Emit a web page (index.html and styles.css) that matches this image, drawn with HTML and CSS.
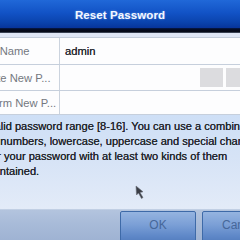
FILE: index.html
```html
<!DOCTYPE html>
<html>
<head>
<meta charset="utf-8">
<link rel="stylesheet" href="styles.css">
</head>
<body>
<div class="dialog">
  <div class="header"><span class="title">Reset Password</span></div>
  <div class="shade"></div>
  <div class="content">
    <div class="table">
      <div class="row r1">
        <div class="label">User Name</div>
        <div class="value">admin</div>
      </div>
      <div class="row r2">
        <div class="label">Create New P...</div>
        <div class="value">
          <div class="strength"><span class="bar"></span><span class="bar"></span></div>
        </div>
      </div>
      <div class="row r3">
        <div class="label">Confirm New P...</div>
        <div class="value"></div>
      </div>
    </div>
    <div class="help">
      <p class="hint">Valid password range [8-16]. You can use a combination<br>of numbers, lowercase, uppercase and special characters<br>for your password with at least two kinds of them<br>contained.</p>
    </div>
    <div class="buttons">
      <button class="btn ok">OK</button>
      <button class="btn cancel">Cancel</button>
    </div>
  </div>
  <svg class="cursor" width="10" height="15" viewBox="0 0 10 15">
    <path d="M1 1 L1.5 10 L3.5 8 L6.5 13.5 L8 12.5 L5 7.5 L8 6.8 Z" fill="#3a3d45" stroke="#6a6e78" stroke-width="0.6"/>
  </svg>
</div>
</body>
</html>
```
FILE: styles.css
```css
html, body {
  margin: 0;
  padding: 0;
}
body {
  width: 240px;
  height: 240px;
  overflow: hidden;
  background: #e3eaf6;
  font-family: "Liberation Sans", Arial, sans-serif;
}
.dialog {
  position: relative;
  width: 240px;
  height: 240px;
  display: flex;
  flex-direction: column;
}
.header {
  height: 28px;
  flex: none;
  display: flex;
  align-items: center;
  justify-content: center;
  background: linear-gradient(to bottom, #2068d8 0%, #1253c6 45%, #0a43ad 80%, #07349a 100%);
}
.title {
  color: #f4f8ff;
  font-size: 11.5px;
  font-weight: 700;
  letter-spacing: 0.1px;
  text-shadow: 0 0 2px rgba(160, 200, 255, 0.6);
  margin-top: 1px;
}
.shade {
  height: 5px;
  flex: none;
  background: linear-gradient(to bottom, #061a4a 0%, #03081a 40%, #070b18 75%, #5a6478 100%);
}
.content {
  flex: 1;
  display: flex;
  flex-direction: column;
  background: #dfe6f5;
  padding-top: 4px;
}
.table {
  margin-left: -28px;
  border-top: 1px solid #c3ccda;
  background: #fdfdfe;
}
.row {
  display: grid;
  grid-template-columns: 88px 1fr;
  border-bottom: 1px solid #c6cfdc;
  font-size: 11.2px;
}
.r1 { height: 26px; }
.r2 { height: 25px; }
.r3 { height: 23px; }
.label {
  border-right: 1px solid #cbd3de;
  color: #74787f;
  display: flex;
  align-items: center;
  padding-left: 1px;
  white-space: nowrap;
}
.value {
  display: flex;
  align-items: center;
  padding-left: 5px;
  color: #2a2d33;
  text-shadow: 0 0 0.4px #2a2d33;
}
.strength {
  margin-left: auto;
  display: flex;
  gap: 3px;
  height: 19px;
  margin-right: -16px;
}
.bar {
  width: 23px;
  background: #dcdcdf;
}
.bar + .bar {
  width: 30px;
}
.help {
  flex: 1;
  background: linear-gradient(to bottom, #cedff6 0%, #d6e3f6 45%, #e3ebf8 100%);
}
.hint {
  margin: 0 0 0 -12px;
  padding-top: 4px;
  font-size: 11.1px;
  line-height: 15px;
  color: #24272d;
  white-space: nowrap;
  text-shadow: 0 0 0.5px #24272d;
}
.buttons {
  height: 29px;
  flex: none;
  display: flex;
  gap: 6px;
  padding: 1px 0 0 120px;
  background: linear-gradient(to bottom, #b3c4de 0%, #a7bad8 50%, #9fb3d3 100%);
  border-top: 1px solid #c1cfe4;
  overflow: hidden;
}
.btn {
  flex: none;
  width: 76px;
  height: 34px;
  border: 1px solid #3e6aa8;
  border-radius: 2px;
  background: linear-gradient(to bottom, #95b4e0 0%, #7b9fd6 40%, #5f88c8 75%, #4f79bb 100%);
  color: #46679a;
  font-family: "Liberation Sans", Arial, sans-serif;
  font-size: 12px;
  padding: 0 0 6px 0;
  text-align: center;
}
.cancel {
  width: 60px;
  text-align: left;
  padding-left: 19px;
}
.cursor {
  position: absolute;
  left: 135px;
  top: 185px;
}
```
